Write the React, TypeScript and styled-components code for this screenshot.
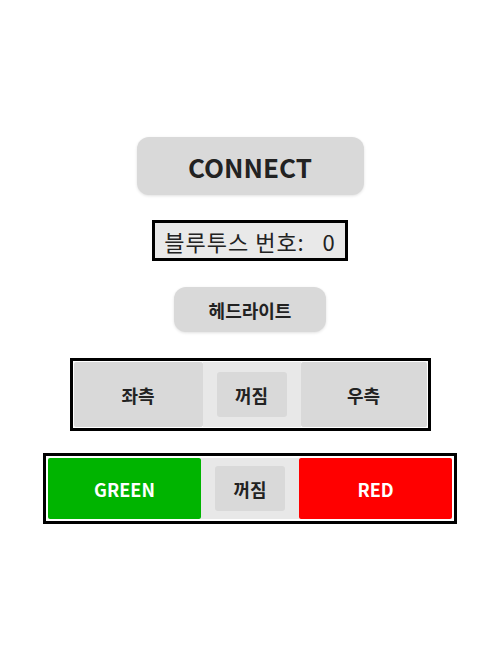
import styled, { createGlobalStyle } from "styled-components";

const GlobalStyle = createGlobalStyle`
  body {
    margin: 0;
    background: #ffffff;
    font-family: "Noto Sans CJK KR", "Noto Sans", sans-serif;
    color: #222;
  }
`;

const Page = styled.div`
  width: 500px;
  height: 658px;
  display: flex;
  flex-direction: column;
  align-items: center;
  padding-top: 137px;
  box-sizing: border-box;
`;

const ConnectButton = styled.button`
  width: 227px;
  height: 58px;
  border: none;
  border-radius: 12px;
  background: #d9d9d9;
  box-shadow: 0 1px 3px rgba(0, 0, 0, 0.12);
  font-family: inherit;
  font-size: 26px;
  font-weight: 700;
  color: #222;
  cursor: pointer;
`;

const NumberLabel = styled.div`
  margin-top: 25px;
  width: 196px;
  height: 41px;
  box-sizing: border-box;
  border: 3px solid #000;
  background: #e9e9e9;
  display: flex;
  align-items: center;
  justify-content: center;
  font-size: 22px;
  letter-spacing: 1px;
  color: #222;
  white-space: pre;
`;

const HeadlightButton = styled.button`
  margin-top: 26px;
  width: 152px;
  height: 45px;
  border: none;
  border-radius: 12px;
  background: #d9d9d9;
  box-shadow: 0 1px 3px rgba(0, 0, 0, 0.12);
  font-family: inherit;
  font-size: 18px;
  font-weight: 700;
  color: #222;
`;

const Switch = styled.div<{ $pad: number; $top: number }>`
  margin-top: ${(p) => p.$top}px;
  display: flex;
  border: 3px solid #000;
  padding: ${(p) => p.$pad}px;
  background: #fff;
`;

const Side = styled.button<{ $w: number; $h: number; $bg: string; $fg: string }>`
  width: ${(p) => p.$w}px;
  height: ${(p) => p.$h}px;
  border: none;
  border-radius: 2px;
  background: ${(p) => p.$bg};
  color: ${(p) => p.$fg};
  font-family: inherit;
  font-size: 18px;
  font-weight: 700;
`;

const Middle = styled.div`
  width: 98px;
  background: #e8e8e8;
  display: flex;
  align-items: center;
  justify-content: center;
`;

const OffButton = styled.button`
  width: 70px;
  height: 45px;
  border: none;
  border-radius: 3px;
  background: #d9d9d9;
  font-family: inherit;
  font-size: 18px;
  font-weight: 700;
  color: #222;
`;

export default function App() {
  return (
    <>
      <GlobalStyle />
      <Page>
        <ConnectButton>CONNECT</ConnectButton>
        <NumberLabel>{"블루투스 번호:   0"}</NumberLabel>
        <HeadlightButton>헤드라이트</HeadlightButton>

        <Switch $pad={1} $top={26}>
          <Side $w={129} $h={65} $bg="#d9d9d9" $fg="#222">좌측</Side>
          <Middle>
            <OffButton>꺼짐</OffButton>
          </Middle>
          <Side $w={126} $h={65} $bg="#d9d9d9" $fg="#222">우측</Side>
        </Switch>

        <Switch $pad={2} $top={22}>
          <Side $w={153} $h={61} $bg="#00b400" $fg="#fff">GREEN</Side>
          <Middle>
            <OffButton>꺼짐</OffButton>
          </Middle>
          <Side $w={153} $h={61} $bg="#ff0000" $fg="#fff">RED</Side>
        </Switch>
      </Page>
    </>
  );
}
